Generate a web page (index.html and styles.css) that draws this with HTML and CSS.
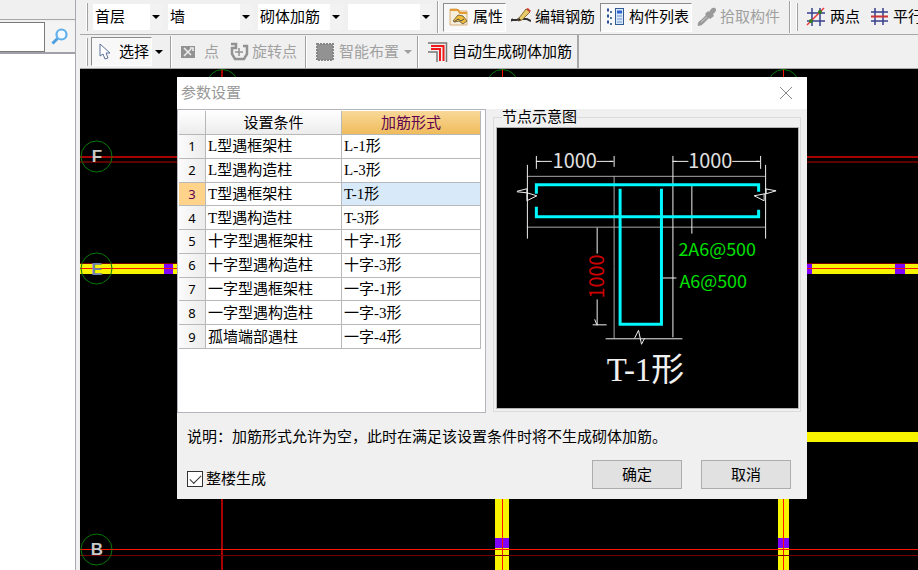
FILE: index.html
```html
<!DOCTYPE html>
<html lang="zh-CN">
<head>
<meta charset="utf-8">
<meta name="viewport" content="width=device-width, initial-scale=1">
<title>参数设置</title>
<link rel="stylesheet" href="styles.css">
</head>
<body>
<div class="app">
  <aside class="sidebar">
    <form class="search">
      <input class="search-input" type="text" aria-label="搜索">
      <button class="search-button" type="button" aria-label="查找">
        <svg width="18" height="18" viewBox="0 0 18 18"><path d="M1.5 15.500 6.500 10.500" stroke="#4f9fe0" stroke-width="3" fill="none"/><circle cx="10.500" cy="6.500" r="5" fill="#f4faff" stroke="#5fb0ec" stroke-width="2.200"/></svg>
      </button>
    </form>
    <div class="tree"></div>
  </aside>

  <main class="workspace">
    <div class="toolbar">
      <span class="grip"></span>
      <div class="combos">
        <label class="combo combo-short"><select aria-label="楼层"><option>首层</option></select></label>
        <label class="combo"><select aria-label="构件类别"><option>墙</option></select></label>
        <label class="combo"><select aria-label="构件类型"><option>砌体加筋</option></select></label>
        <label class="combo"><select aria-label="构件"><option></option></select></label>
      </div>
      <span class="divider"></span>
      <button class="tool pressed" type="button">
        <svg width="20" height="20" viewBox="0 0 20 20"><path d="M1 2h7l2 2h8v14H1z" fill="#f6edda" stroke="#d8b078"/><path d="M1 3h8l2 3h7" stroke="#e39b35" stroke-width="2" fill="none"/><path d="M4 14l5-6 5 1 4 5-4 3-4-3-4 1z" fill="#f0bc35" stroke="#7a6a48"/><path d="M5 15l4-3 3 2 3-2" stroke="#4d4d4d" fill="none"/></svg>
        属性</button>
      <button class="tool" type="button">
        <svg width="20" height="20" viewBox="0 0 20 20"><path d="M0 13h6l3-2M11 12h5l4 2M2 12l-2 2" stroke="#333" stroke-width="2" fill="none"/><path d="M8 11 15 2l4 3-8 8-4 1z" fill="#e6c968" stroke="#8a6b33"/><path d="m15 2 2-1 3 3-1 1z" fill="#d33a32"/><path d="m7 14 1-3 2 2z" fill="#222"/></svg>
        编辑钢筋</button>
      <button class="tool pressed" type="button">
        <svg width="19" height="20" viewBox="0 0 19 20"><path d="M1 3h2M1 9h2M1 15h2" stroke="#2b4f93" stroke-width="3"/><path d="M4 5h3M4 11h3M4 17h3" stroke="#53739f" stroke-width="2" stroke-dasharray="2 1"/><rect x="9.500" y="1.500" width="8" height="16" fill="#d8e8fb" stroke="#345a92"/><path d="M11 5h5" stroke="#2b62cf" stroke-width="3"/><path d="M11 9h5M11 12h5M11 15h5" stroke="#6c94cf"/></svg>
        构件列表</button>
      <button class="tool" type="button" disabled>
        <svg width="19" height="20" viewBox="0 0 19 20"><path d="M1 19c-1-3 1-5 3-6l5-5-1-1 3-3 1 1c2-4 4-5 6-4s1 4-2 6l1 2-4 3-1-1-5 5c-2 2-3 3-6 3z" fill="#9a9a9a"/><path d="m4 15 6-5" stroke="#ccc"/></svg>
        拾取构件</button>
      <span class="divider"></span>
      <span class="grip"></span>
      <button class="tool" type="button">
        <svg width="20" height="20" viewBox="0 0 20 20"><path d="M6 1v18M14 1v18M1 6h18M1 14h18" stroke="#37408c" stroke-width="1.500"/><path d="M1 18 18 1" stroke="#e33" stroke-width="1.500"/><circle cx="5" cy="14" r="2" fill="#2d7d22"/><circle cx="14" cy="5" r="2" fill="#2d7d22"/></svg>
        两点</button>
      <button class="tool" type="button">
        <svg width="19" height="20" viewBox="0 0 19 20"><path d="M5 1v17M13 1v17M1 5h17M1 14h17" stroke="#37408c" stroke-width="1.500"/><path d="M1 9.500h17" stroke="#c33" stroke-width="2"/></svg>
        平行</button>
    </div>

    <div class="toolbar toolbar-draw">
      <span class="grip"></span>
      <button class="tool pressed select-tool" type="button">
        <svg width="12" height="18" viewBox="0 0 12 18"><path d="M1 1v12l3-2 2 5 3-1-2-5h4z" fill="#fff" stroke="#5c7299"/></svg>
        选择</button>
      <span class="arrow"></span>
      <span class="divider"></span>
      <button class="tool point-tool" type="button" disabled>
        <svg width="16" height="16" viewBox="0 0 16 16"><path d="M1 2h14v12H1z" fill="#929292"/><path d="m4 4 7 7M11 5l-7 7M10 4h3v3" stroke="#eee" stroke-width="1.500" fill="none"/></svg>
        点</button>
      <button class="tool rotate-tool" type="button" disabled>
        <svg width="20" height="20" viewBox="0 0 20 20"><path d="M2 2h5v4H3v6l3 5h9l3-5V4h-4" fill="none" stroke="#929292" stroke-width="2.500"/><path d="M6 10h8M10 6v8" stroke="#929292" stroke-width="1.500"/></svg>
        旋转点</button>
      <span class="divider"></span>
      <button class="tool" type="button" disabled>
        <svg width="20" height="20" viewBox="0 0 20 20"><rect x="2" y="2" width="16" height="16" fill="#929292" stroke="#858585" stroke-width="2" stroke-dasharray="2 1"/></svg>
        智能布置</button>
      <span class="arrow arrow-off"></span>
      <span class="divider"></span>
      <button class="tool" type="button">
        <svg width="21" height="20" viewBox="0 0 21 20"><path d="M1 1h18.500v19M1 10h9v10" stroke="#777" stroke-width="1.500" fill="none"/><path d="M4 4h12.500v15M4 7h9v12" stroke="#f01818" stroke-width="2" fill="none"/></svg>
        自动生成砌体加筋</button>
      <span class="toolbar-end"></span>
    </div>

    <section class="canvas">
      <svg class="drawing" width="100%" height="100%" aria-hidden="true">
        <g class="axis">
          <path d="M142 0v900"/>
          <line x1="0" y1="88" x2="100%" y2="88"/>
        </g>
        <line class="axis-dim" x1="0" y1="93" x2="100%" y2="93"/>
        <g class="wall">
          <rect x="0" y="195" width="100%" height="10"/>
          <rect x="422" y="363" width="100%" height="10"/>
          <rect x="415" y="200" width="14" height="500"/>
          <rect x="698" y="200" width="11" height="500"/>
        </g>
        <g class="column">
          <rect x="84" y="195" width="9" height="10"/>
          <rect x="720" y="195" width="12" height="10"/>
          <rect x="815" y="195" width="10" height="10"/>
          <rect x="415" y="469" width="14" height="10"/>
          <rect x="698" y="469" width="11" height="10"/>
        </g>
        <line class="axis-dim thin" x1="0" y1="194.500" x2="100%" y2="194.500"/>
        <g class="axis-bright">
          <line x1="0" y1="199.500" x2="100%" y2="199.500"/>
          <path d="M422.500 0v10M703.500 0v10M422.500 420v500M703.500 420v500"/>
          <line x1="0" y1="480.500" x2="100%" y2="480.500"/>
        </g>
        <line class="axis-dim thin" x1="0" y1="486.500" x2="100%" y2="486.500"/>
        <g class="bubble">
          <circle cx="16.500" cy="87.500" r="15.500"/>
          <circle cx="16.500" cy="199.500" r="15.500"/>
          <circle cx="16.500" cy="480.500" r="15.500"/>
          <circle cx="142.500" cy="16" r="15.500"/>
          <circle cx="422.500" cy="16" r="15.500"/>
          <circle cx="703.500" cy="16" r="15.500"/>
        </g>
        <g class="bubble-label">
          <text x="17" y="93">F</text>
          <text class="over-wall" x="17" y="206">E</text>
          <text x="17" y="486">B</text>
        </g>
      </svg>

      <div class="dialog" role="dialog" aria-labelledby="dialog-title">
        <header class="titlebar">
          <h1 id="dialog-title">参数设置</h1>
          <button class="close" type="button" aria-label="关闭"><svg width="12" height="12" viewBox="0 0 12 12"><path d="m0 0 12 12M12 0 0 12" stroke="#888" fill="none"/></svg></button>
        </header>
        <div class="panes">
          <div class="table-pane">
            <table>
              <colgroup><col class="col-num"><col class="col-cond"><col class="col-form"></colgroup>
              <thead><tr><th></th><th>设置条件</th><th class="sorted">加筋形式</th></tr></thead>
              <tbody>
                <tr><th>1</th><td>L型遇框架柱</td><td>L-1形</td></tr>
                <tr><th>2</th><td>L型遇构造柱</td><td>L-3形</td></tr>
                <tr class="current"><th>3</th><td>T型遇框架柱</td><td class="selected">T-1形</td></tr>
                <tr><th>4</th><td>T型遇构造柱</td><td>T-3形</td></tr>
                <tr><th>5</th><td>十字型遇框架柱</td><td>十字-1形</td></tr>
                <tr><th>6</th><td>十字型遇构造柱</td><td>十字-3形</td></tr>
                <tr><th>7</th><td>一字型遇框架柱</td><td>一字-1形</td></tr>
                <tr><th>8</th><td>一字型遇构造柱</td><td>一字-3形</td></tr>
                <tr><th>9</th><td>孤墙端部遇柱</td><td>一字-4形</td></tr>
              </tbody>
            </table>
          </div>
          <fieldset class="preview">
            <legend>节点示意图</legend>
            <svg class="diagram" viewBox="0 0 302 281" role="img" aria-label="T-1形节点">
              <g class="outline">
                <path d="M30 48.500h239M30 99.500h239M117.500 48v91M117.500 139v72"/>
              </g>
              <g class="outline-light">
                <path d="M30.500 37v74M269.500 37v74M176.500 28v182M109 211.500h77M195.500 58v48M164 150.500h16M39.500 28v13M117.500 28v11M264.500 28v13M39 33.500h16M100 33.500h17M176 33.500h16M236 33.500h28M100.500 100v26M100.500 172v26M96 197.500h14"/>
                <path d="M20 63.500 30 61v4l-10-1M30 65l10 3-10 5v-8M269 61l11 2-10 3v-5M269 66l-11 2 10 5v-7M138 211l4-8 3 14 3-6M40 33.500h3M113 33.500h3M177 33.500h3M260 33.500h3M98 192l2 5"/>
              </g>
              <g class="rebar">
                <path d="M39.500 66v-9h223v7M39.500 79v10h223v-7M123.500 61v136h41.500v-136"/>
              </g>
              <g class="dim">
                <text x="78" y="40">1000</text>
                <text x="214" y="40">1000</text>
              </g>
              <text class="dim dim-red" transform="translate(107 149) rotate(-90)">1000</text>
              <g class="spec">
                <text x="182" y="128">2A6@500</text>
                <text x="183" y="161">A6@500</text>
              </g>
              <text class="caption" x="149" y="254">T-1形</text>
            </svg>
          </fieldset>
        </div>
        <p class="note">说明：加筋形式允许为空，此时在满足该设置条件时将不生成砌体加筋。</p>
        <footer class="actions">
          <label class="check"><input type="checkbox" checked><span>整楼生成</span></label>
          <button class="push" type="button">确定</button>
          <button class="push" type="button">取消</button>
        </footer>
      </div>
    </section>
  </main>
</div>
</body>
</html>
```
FILE: styles.css
```css
* {
  box-sizing: border-box;
}

body {
  margin: 0;
  background: #f0f0f0;
  color: #000;
  font: 15px/20px "Liberation Serif", "Noto Sans CJK SC", sans-serif;
}

button,
input,
select {
  margin: 0;
  color: inherit;
  font: inherit;
}

.app {
  display: grid;
  grid-template-columns: 76px minmax(0, 1fr);
  column-gap: 4px;
  height: 100vh;
  overflow: hidden;
}

/* Left panel */

.sidebar {
  display: flex;
  flex-direction: column;
  padding-top: 19px;
  border-right: 1px solid #a8a8b0;
}

.search {
  display: flex;
  height: 35px;
  padding-top: 2px;
  border-top: 1px solid #a8a8a8;
  border-bottom: 2px solid #a0a0a8;
}

.search-input {
  width: 45px;
  height: 30px;
  border: 1px solid #7a7a7a;
  border-left: 0;
  background: #fff;
}

.search-button {
  display: grid;
  flex: 1;
  place-items: center;
  padding: 0;
  border: 0;
  background: #f4f4f4;
}

.tree {
  flex: 1;
  background: #fff;
}

/* Toolbars */

.workspace {
  display: flex;
  flex-direction: column;
  min-width: 0;
}

.toolbar {
  display: flex;
  align-items: center;
  height: 35px;
  padding-left: 6px;
  border-bottom: 1px solid #a8a8a8;
  overflow: hidden;
  white-space: nowrap;
}

.toolbar > * {
  flex: none;
}

.toolbar-draw {
  height: 34px;
}

.grip {
  width: 2px;
  height: 28px;
  margin-right: 3px;
  border-left: 1px solid #fff;
  border-right: 1px solid #a0a0a0;
}

.divider {
  width: 2px;
  height: 32px;
  margin: 0 4px;
  border-left: 1px solid #a0a0a0;
  border-right: 1px solid #fff;
}

.toolbar-draw .divider {
  margin: 0 3px;
}

.divider + .grip {
  margin-left: 1px;
}

.combos {
  display: flex;
  gap: 5px;
  padding-left: 2px;
}

.combo {
  position: relative;
  width: 85px;
}

.combo-short {
  width: 70px;
}

.combo select {
  display: block;
  width: 100%;
  height: 26px;
  padding: 0 13px 0 2px;
  border: 0;
  border-radius: 0;
  background: linear-gradient(#f2f2f2, #f2f2f2) right / 13px 100% no-repeat #fff;
  appearance: none;
}

.combo::after {
  position: absolute;
  top: 11px;
  right: 3px;
  border: 4px solid transparent;
  border-top-color: #000;
  border-bottom: 0;
  content: "";
}

.tool {
  display: flex;
  align-items: center;
  gap: 4px;
  height: 29px;
  padding: 0 4px;
  border: 1px solid transparent;
  background: transparent;
}

.tool.pressed {
  padding: 0 2px 0 5px;
  border-color: #8c8c8c #fff #fff #8c8c8c;
  background: #f8f8f8;
}

.tool:disabled {
  color: #a0a0a0;
}

.tool.select-tool {
  gap: 8px;
  padding-left: 7px;
}

.tool.point-tool {
  gap: 8px;
}

.tool.rotate-tool {
  gap: 3px;
}

.arrow {
  margin: 0 4px 0 3px;
  border: 4px solid transparent;
  border-top-color: #000;
  border-bottom: 0;
}

.arrow-off {
  margin: 0 2px 0 0;
  border-top-color: #a0a0a0;
}

.toolbar-end {
  align-self: stretch;
  border-right: 2px solid #a8a8a8;
}

/* Drawing area */

.canvas {
  position: relative;
  flex: 1;
  min-height: 0;
  overflow: hidden;
  background: #000;
}

.drawing {
  display: block;
}

.axis {
  stroke: #a80000;
  stroke-width: 2;
}

.axis-bright {
  stroke: #ff1400;
  stroke-width: 1;
}

.axis-dim {
  stroke: #5c0000;
  stroke-width: 2;
}

.axis-dim.thin {
  stroke: #780000;
  stroke-width: 1;
}

.wall {
  fill: #f8f400;
}

.column {
  fill: #8000ff;
}

.bubble {
  fill: none;
  stroke: #087808;
}

.bubble-label {
  fill: #c8c8c8;
  font: bold 17px "Liberation Sans", sans-serif;
  text-anchor: middle;
}

.bubble-label .over-wall {
  fill: #7080b0;
}

/* Dialog window */

.dialog {
  position: absolute;
  top: 8px;
  left: 97px;
  width: 630px;
  background: #f0f0f0;
}

.titlebar {
  display: flex;
  align-items: center;
  justify-content: space-between;
  height: 32px;
  padding: 0 15px 0 4px;
  background: #fff;
}

.titlebar h1 {
  margin: 0;
  color: #999;
  font-size: 15px;
  font-weight: normal;
}

.close {
  display: grid;
  padding: 0;
  border: 0;
  background: transparent;
}

.panes {
  display: grid;
  grid-template-columns: 309px minmax(0, 1fr);
  column-gap: 7px;
  padding-right: 6px;
}

.table-pane {
  height: 304px;
  padding: 1px;
  border: 1px solid #b4b4bc;
  background: #fff;
}

table {
  width: 302px;
  height: 238px;
  border-collapse: separate;
  border-spacing: 0;
  table-layout: fixed;
}

.col-num {
  width: 27px;
}

.col-cond {
  width: 136px;
}

th,
td {
  padding: 0 2px;
  border-right: 1px solid #b8b8b8;
  border-bottom: 1px solid #b8b8b8;
  line-height: 20px;
  text-align: left;
  white-space: nowrap;
}

th {
  background: linear-gradient(#fff, #ececec);
  font-weight: normal;
  text-align: center;
}

tbody th {
  font: 13px/20px "Noto Sans", sans-serif;
  background: linear-gradient(to right, #fbfbfb, #ececec);
}

thead th {
  height: 24px;
}

th.sorted {
  background: linear-gradient(#f8d898, #f0bc5c);
  color: #600050;
}

.current th {
  background: #ffd48a;
  color: #600050;
}

td.selected {
  background: #d8eaf9;
}

.preview {
  min-width: 0;
  height: 303px;
  margin: 0;
  padding: 0 1px 0 2px;
  border: 1px solid #dcdcdc;
}

.preview legend {
  height: 17px;
  margin-left: 6px;
  padding: 0;
  line-height: 16px;
}

.diagram {
  display: block;
  width: 100%;
  margin-top: 1px;
  border: 1px solid #b4b4b4;
  background: #000;
}

.outline,
.outline-light {
  fill: none;
  stroke: #a8a8a8;
}

.outline-light {
  stroke: #f0f0f0;
}

.rebar {
  fill: none;
  stroke: #00f8ff;
  stroke-width: 3;
}

.dim {
  fill: #e0e0e0;
  font: 20px "Noto Sans CJK SC", sans-serif;
  text-anchor: middle;
}

.dim-red {
  fill: #d00000;
}

.spec {
  fill: #00e000;
  font: 18px "Noto Sans CJK SC", sans-serif;
}

.caption {
  fill: #f0f0f0;
  font: 33px "Liberation Serif", "Noto Sans CJK SC", serif;
  text-anchor: middle;
}

.note {
  margin: 14px 0 0 10px;
}

.actions {
  display: flex;
  align-items: center;
  gap: 19px;
  padding: 13px 16px 10px 10px;
}

.check {
  display: flex;
  align-items: center;
  gap: 3px;
  margin-right: auto;
  padding-top: 8px;
}

.check input {
  width: 16px;
  height: 16px;
  border: 1px solid #333;
  background: #fff;
  appearance: none;
}

.check input:checked::before {
  display: block;
  width: 10px;
  height: 5px;
  margin: 3px 2px;
  border: solid #333;
  border-width: 0 0 1px 1px;
  content: "";
  transform: rotate(-45deg);
}

.push {
  width: 90px;
  height: 29px;
  padding: 0;
  border: 1px solid #adadad;
  background: #e1e1e1;
}
```
